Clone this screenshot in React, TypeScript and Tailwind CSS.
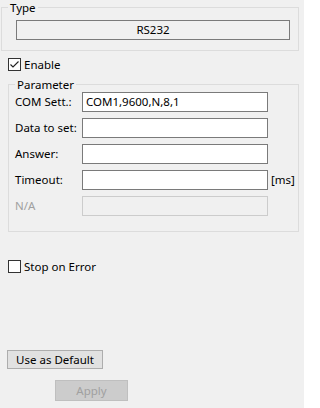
import React from "react";

const font = { fontFamily: '"Noto Sans", "Liberation Sans", sans-serif' };

const Check = ({ checked, label }: { checked?: boolean; label: string }) => (
  <label className="flex items-center gap-[3px] h-[15px] text-[11.5px] leading-[15px] text-black whitespace-nowrap">
    <span className="w-[13px] h-[13px] border border-[#333333] bg-white flex items-center justify-center">
      {checked && (
        <svg width="11" height="11" viewBox="0 0 11 11" fill="none">
          <path d="M1.5 5.5 L4 8 L9.5 2.5" stroke="#202020" strokeWidth="1.1" />
        </svg>
      )}
    </span>
    {label}
  </label>
);

const Row = ({ label, value, suffix, disabled }: { label: string; value?: string; suffix?: string; disabled?: boolean }) => (
  <div className="flex items-center h-[20px]">
    <span className={`w-[73px] pl-[6px] text-[11.5px] whitespace-nowrap ${disabled ? "text-[#a0a0a0]" : "text-black"}`}>
      {label}
    </span>
    <div
      className={`w-[186px] h-[20px] border px-[3px] flex items-center text-[11.5px] whitespace-nowrap ${
        disabled ? "border-[#cccccc] bg-[#f0f0f0]" : "border-[#7a7a7a] bg-white"
      }`}
    >
      {value}
    </div>
    {suffix && <span className="ml-[3px] text-[11.5px] text-black">{suffix}</span>}
  </div>
);

export default function App() {
  return (
    <div style={font} className="w-[304px] h-[408px] bg-[#f0f0f0] flex flex-col text-black overflow-hidden">
      <fieldset className="ml-[1px] w-[298px] border border-[#dcdcdc] pb-[10px]">
        <legend className="ml-[6px] px-[2px] text-[11.5px] leading-[15px]">Type</legend>
        <div className="ml-[14px] mt-[5px] w-[274px] h-[20px] border border-[#7a7a7a] bg-[#f0f0f0] flex items-center justify-center text-[11.5px]">
          RS232
        </div>
      </fieldset>

      <div className="ml-[8px] mt-[6px]">
        <Check checked label="Enable" />
      </div>

      <fieldset className="ml-[8px] mt-[5px] w-[291px] border border-[#dcdcdc] pb-[15px]">
        <legend className="ml-[6px] px-[2px] text-[11.5px] leading-[15px]">Parameter</legend>
        <div className="flex flex-col gap-[6px]">
          <Row label="COM Sett.:" value="COM1,9600,N,8,1" />
          <Row label="Data to set:" />
          <Row label="Answer:" />
          <Row label="Timeout:" suffix="[ms]" />
          <Row label="N/A" disabled />
        </div>
      </fieldset>

      <div className="ml-[8px] mt-[27px]">
        <Check label="Stop on Error" />
      </div>

      <button className="ml-[7px] mt-[76px] w-[96px] h-[19px] border border-[#adadad] bg-[#e1e1e1] text-[11.5px] leading-none text-black">
        Use as Default
      </button>

      <button
        disabled
        className="ml-[55px] mt-[11px] w-[73px] h-[21px] border border-[#bfbfbf] bg-[#cccccc] text-[11.5px] leading-none text-[#a0a0a0]"
      >
        Apply
      </button>
    </div>
  );
}
